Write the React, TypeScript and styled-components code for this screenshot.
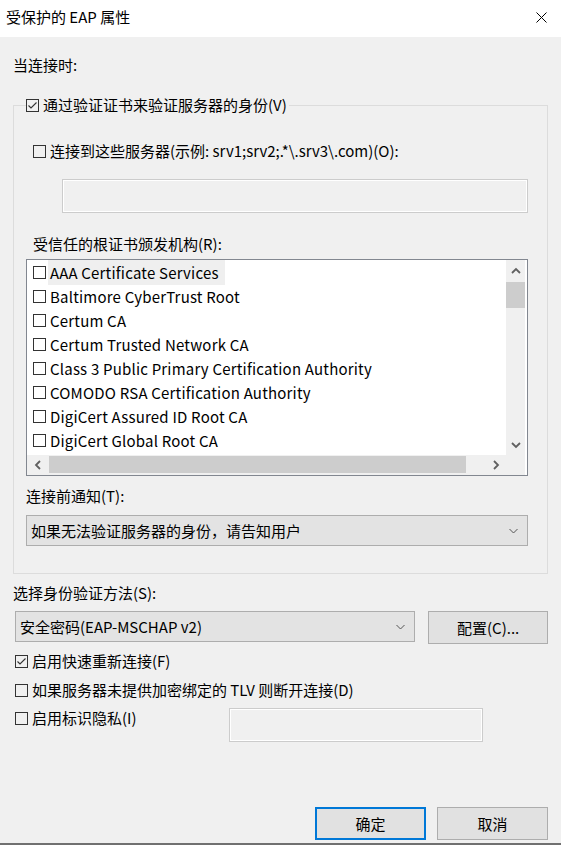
import React from "react";
import styled, { createGlobalStyle } from "styled-components";

const GlobalStyle = createGlobalStyle`
  html, body { margin: 0; padding: 0; background: #f0f0f0; }
  body {
    font-family: "Noto Sans CJK SC", "Microsoft YaHei", sans-serif;
    font-size: 15px;
    color: #000;
  }
  * { box-sizing: border-box; }
`;

const Window = styled.div`
  width: 561px;
  height: 845px;
  display: flex;
  flex-direction: column;
  background: #f0f0f0;
  border-bottom: 2px solid #707070;
`;

const TitleBar = styled.div`
  height: 37px;
  flex-shrink: 0;
  background: #fff;
  display: flex;
  align-items: center;
  justify-content: space-between;
  padding: 0 0 3px 6px;
`;

const TitleText = styled.div`
  font-size: 15px;
  line-height: 20px;
`;

const CloseButton = styled.div`
  width: 40px;
  height: 34px;
  display: flex;
  align-items: center;
  justify-content: center;
`;

const Body = styled.div`
  flex: 1;
  display: flex;
  flex-direction: column;
  padding: 0 13px;
`;

const Label = styled.div<{ $mt: number; $ml?: number }>`
  line-height: 20px;
  height: 20px;
  white-space: nowrap;
  margin-top: ${(p) => p.$mt}px;
  margin-left: ${(p) => p.$ml ?? 0}px;
`;

const Group = styled.fieldset`
  margin: 20px 0 0 0;
  padding: 0 19px 27px 12px;
  border: 1px solid #dcdcdc;
  min-width: 0;
  display: flex;
  flex-direction: column;
`;

const Legend = styled.legend`
  padding: 0 2px 0 0;
  margin: 0;
  display: flex;
  align-items: center;
  gap: 4px;
  line-height: 20px;
  height: 20px;
`;

const CheckRow = styled.div<{ $mt: number; $ml?: number }>`
  display: flex;
  align-items: center;
  gap: 4px;
  line-height: 20px;
  height: 20px;
  white-space: nowrap;
  margin-top: ${(p) => p.$mt}px;
  margin-left: ${(p) => p.$ml ?? 0}px;
`;

const Box = styled.span`
  width: 13px;
  height: 13px;
  flex-shrink: 0;
  border: 1px solid #333;
  display: inline-flex;
  align-items: center;
  justify-content: center;
`;

const TextField = styled.div<{ $mt?: number; $ml?: number; $w?: number }>`
  height: 34px;
  margin-top: ${(p) => p.$mt ?? 0}px;
  margin-left: ${(p) => p.$ml ?? 0}px;
  width: ${(p) => (p.$w ? `${p.$w}px` : "auto")};
  border: 1px solid #cccccc;
  box-shadow: inset 0 0 0 1px #ffffff;
  background: #f0f0f0;
`;

const ListBox = styled.div`
  margin-top: 5px;
  height: 217px;
  border: 1px solid #828790;
  background: #fff;
  padding-right: 2px;
  display: grid;
  grid-template-columns: 479px 19px;
  grid-template-rows: 195px 20px;
`;

const ListItems = styled.div`
  padding-top: 0px;
  display: flex;
  flex-direction: column;
  overflow: hidden;
`;

const ListRow = styled.div`
  height: 24px;
  display: flex;
  align-items: center;
  padding-left: 6px;
  white-space: nowrap;
`;

const ItemText = styled.span<{ $focus?: boolean }>`
  margin-left: 2px;
  padding: 0 6px 0 2px;
  height: 25px;
  line-height: 25px;
  letter-spacing: 0.2px;
  background: ${(p) => (p.$focus ? "#efefef" : "transparent")};
`;

const VScroll = styled.div`
  background: #f0f0f0;
  display: flex;
  flex-direction: column;
`;

const HScroll = styled.div`
  background: #f0f0f0;
  display: flex;
  align-items: stretch;
`;

const ScrollCorner = styled.div`
  background: #f0f0f0;
`;

const ArrowButton = styled.div<{ $size: number; $vertical?: boolean }>`
  flex-shrink: 0;
  ${(p) => (p.$vertical ? `height: ${p.$size}px;` : `width: ${p.$size}px;`)}
  display: flex;
  align-items: center;
  justify-content: center;
`;

const Thumb = styled.div<{ $size: number; $vertical?: boolean }>`
  flex-shrink: 0;
  background: #cdcdcd;
  ${(p) =>
    p.$vertical
      ? `height: ${p.$size}px; margin-top: 1px;`
      : `width: ${p.$size}px; margin: 1px 0 2px 0;`}
`;

const Track = styled.div`
  flex: 1;
`;

const Combo = styled.div<{ $mt?: number; $w?: number }>`
  height: 31px;
  margin-top: ${(p) => p.$mt ?? 0}px;
  width: ${(p) => (p.$w ? `${p.$w}px` : "auto")};
  background: #e3e3e3;
  border: 1px solid #adadad;
  display: flex;
  align-items: center;
  justify-content: space-between;
  padding: 0 9px 0 4px;
  white-space: nowrap;
  line-height: 20px;
`;

const MethodRow = styled.div`
  margin-top: 8px;
  margin-left: 2px;
  display: flex;
  align-items: flex-start;
  gap: 13px;
`;

const Button = styled.div<{ $default?: boolean; $w: number }>`
  width: ${(p) => p.$w}px;
  height: 33px;
  background: #e1e1e1;
  border: ${(p) => (p.$default ? "2px solid #0078d7" : "1px solid #adadad")};
  display: flex;
  align-items: center;
  justify-content: center;
  line-height: 20px;
  white-space: nowrap;
`;

const PrivacyRow = styled.div`
  margin-top: 8px;
  margin-left: 2px;
  display: grid;
  grid-template-columns: 214px 254px;
  align-items: start;
`;

const Footer = styled.div`
  margin-top: auto;
  padding-bottom: 3px;
  display: flex;
  justify-content: flex-end;
  gap: 11px;
`;

const CheckMark = () => (
  <svg width="11" height="11" viewBox="0 0 11 11">
    <polyline points="1.5,5.5 4,8 9.5,2.5" fill="none" stroke="#333" strokeWidth="1.1" />
  </svg>
);

const Checkbox = ({ checked }: { checked?: boolean }) => (
  <Box>{checked ? <CheckMark /> : null}</Box>
);

const ComboChevron = () => (
  <svg width="9" height="6" viewBox="0 0 9 6">
    <polyline points="0.5,1 4.5,5 8.5,1" fill="none" stroke="#555" strokeWidth="1" />
  </svg>
);

const ScrollArrow = ({ dir }: { dir: "up" | "down" | "left" | "right" }) => {
  const pts: Record<string, string> = {
    up: "1,6 5,2 9,6",
    down: "1,2 5,6 9,2",
    left: "6,1 2,5 6,9",
    right: "2,1 6,5 2,9",
  };
  const vertical = dir === "up" || dir === "down";
  return (
    <svg width={vertical ? 10 : 8} height={vertical ? 8 : 10} viewBox={vertical ? "0 0 10 8" : "0 0 8 10"}>
      <polyline points={pts[dir]} fill="none" stroke="#606060" strokeWidth="1.8" />
    </svg>
  );
};

const CloseIcon = () => (
  <svg width="11" height="11" viewBox="0 0 11 11">
    <line x1="0.5" y1="0.5" x2="10.5" y2="10.5" stroke="#000" strokeWidth="1" />
    <line x1="10.5" y1="0.5" x2="0.5" y2="10.5" stroke="#000" strokeWidth="1" />
  </svg>
);

const certs = [
  "AAA Certificate Services",
  "Baltimore CyberTrust Root",
  "Certum CA",
  "Certum Trusted Network CA",
  "Class 3 Public Primary Certification Authority",
  "COMODO RSA Certification Authority",
  "DigiCert Assured ID Root CA",
  "DigiCert Global Root CA",
];

export default function App() {
  return (
    <>
      <GlobalStyle />
      <Window>
        <TitleBar>
          <TitleText>受保护的 EAP 属性</TitleText>
          <CloseButton>
            <CloseIcon />
          </CloseButton>
        </TitleBar>
        <Body>
          <Label $mt={18}>当连接时:</Label>
          <Group>
            <Legend>
              <Checkbox checked />
              <span>通过验证证书来验证服务器的身份(V)</span>
            </Legend>
            <CheckRow $mt={26} $ml={7}>
              <Checkbox />
              <span>连接到这些服务器(示例: srv1;srv2;.*\.srv3\.com)(O):</span>
            </CheckRow>
            <TextField $mt={18} $ml={36} />
            <Label $mt={21} $ml={7}>受信任的根证书颁发机构(R):</Label>
            <ListBox>
              <ListItems>
                {certs.map((c, i) => (
                  <ListRow key={c}>
                    <Checkbox />
                    <ItemText $focus={i === 0}>{c}</ItemText>
                  </ListRow>
                ))}
              </ListItems>
              <VScroll>
                <ArrowButton $vertical $size={21}>
                  <ScrollArrow dir="up" />
                </ArrowButton>
                <Thumb $vertical $size={26} />
                <Track />
                <ArrowButton $vertical $size={21}>
                  <ScrollArrow dir="down" />
                </ArrowButton>
              </VScroll>
              <HScroll>
                <ArrowButton $size={22}>
                  <ScrollArrow dir="left" />
                </ArrowButton>
                <Thumb $size={417} />
                <Track />
                <ArrowButton $size={21}>
                  <ScrollArrow dir="right" />
                </ArrowButton>
              </HScroll>
              <ScrollCorner />
            </ListBox>
            <Label $mt={10}>连接前通知(T):</Label>
            <Combo $mt={9}>
              <span>如果无法验证服务器的身份，请告知用户</span>
              <ComboChevron />
            </Combo>
          </Group>
          <Label $mt={9}>选择身份验证方法(S):</Label>
          <MethodRow>
            <Combo $w={401}>
              <span>安全密码(EAP-MSCHAP v2)</span>
              <ComboChevron />
            </Combo>
            <Button $w={120}>配置(C)...</Button>
          </MethodRow>
          <CheckRow $mt={7} $ml={2}>
            <Checkbox checked />
            <span>启用快速重新连接(F)</span>
          </CheckRow>
          <CheckRow $mt={9} $ml={2}>
            <Checkbox />
            <span>如果服务器未提供加密绑定的 TLV 则断开连接(D)</span>
          </CheckRow>
          <PrivacyRow>
            <CheckRow $mt={0}>
              <Checkbox />
              <span>启用标识隐私(I)</span>
            </CheckRow>
            <TextField />
          </PrivacyRow>
          <Footer>
            <Button $default $w={111}>确定</Button>
            <Button $w={111}>取消</Button>
          </Footer>
        </Body>
      </Window>
    </>
  );
}
